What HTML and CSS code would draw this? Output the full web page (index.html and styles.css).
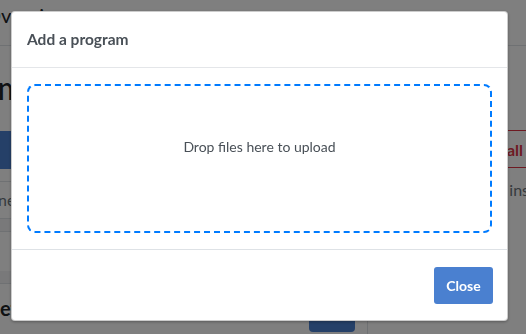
FILE: index.html
```html
<!DOCTYPE html>
<html>
<head>
    <meta charset="UTF-8">
    <meta name="viewport" content="width=device-width, initial-scale=1.0">
    <title>Add a program</title>
    <link rel="stylesheet" href="styles.css">
</head>
<body>
    <!-- Page behind the dialog -->
    <div class="page">
        <div class="topbar">
            <span class="brand">Overview</span>
        </div>
        <div class="main">
            <div class="content">
                <h1 class="heading">Programs</h1>
                <div class="tabs">
                    <span class="tab"></span>
                </div>
                <div class="search">newest first</div>
                <div class="table-head"></div>
                <div class="table-row"></div>
                <div class="table-head"></div>
                <div class="section">
                    <span class="section-title">Settings</span>
                    <button class="btn-save"></button>
                </div>
            </div>
            <div class="sidebar">
                <button class="btn-danger">Uninstall all</button>
                <p class="hint">Select programs to install</p>
            </div>
        </div>
    </div>

    <!-- Modal -->
    <div class="backdrop">
        <div class="dialog">
            <div class="dialog-header">
                <h5 class="dialog-title">Add a program</h5>
            </div>
            <div class="dialog-body">
                <div class="dropzone">Drop files here to upload</div>
            </div>
            <div class="dialog-footer">
                <button class="btn-close">Close</button>
            </div>
        </div>
    </div>
</body>
</html>
```

FILE: styles.css
```css
body {
    font-family: Lato, "Open Sans", Arial, sans-serif;
    margin: 0;
    padding: 0;
    background-color: #fff;
    overflow: hidden;
    height: 334px;
    color: #212529;
}

/* Page under the backdrop */
.page {
    width: 640px;
    margin-left: -60px;
}

.topbar {
    height: 46px;
    border-bottom: 1px solid #dee2e6;
    padding-left: 45px;
    box-sizing: border-box;
}

.brand {
    display: inline-block;
    font-size: 20px;
    line-height: 24px;
    padding-top: 3px;
}

.main {
    display: flex;
}

.content {
    width: 427px;
}

.heading {
    font-size: 32px;
    font-weight: 500;
    margin: 0 0 0 -35px;
    padding-top: 22px;
    line-height: 40px;
}

.tabs {
    margin-top: 23px;
    padding-left: 40px;
}

.tab {
    display: block;
    height: 38px;
    background-color: #4a80d0;
    border-radius: 3px;
}

.search {
    margin-top: 12px;
    height: 36px;
    border-top: 1px solid #dee2e6;
    border-bottom: 1px solid #dee2e6;
    color: #6c757d;
    font-size: 16px;
    line-height: 36px;
    padding-left: 58px;
}

.table-head {
    height: 12px;
    background-color: #f2f3f5;
    border-bottom: 1px solid #dee2e6;
}

.table-row {
    height: 39px;
}

.section {
    display: flex;
    align-items: flex-start;
    justify-content: space-between;
    padding: 12px 12px 0 49px;
}

.section-title {
    font-size: 20px;
    font-weight: 700;
    line-height: 24px;
}

.btn-save {
    width: 46px;
    height: 36px;
    border: none;
    border-radius: 4px;
    background-color: #4a80d0;
}

.sidebar {
    flex: 1;
    border-left: 1px solid #dee2e6;
    min-height: 300px;
    padding: 84px 0 0 20px;
}

.btn-danger {
    display: block;
    width: 190px;
    height: 38px;
    border: 1px solid #dc3545;
    border-radius: 4px;
    background: #fff;
    color: #dc3545;
    font-family: inherit;
    font-size: 16px;
    font-weight: 700;
    text-align: right;
    padding-right: 34px;
}

.hint {
    margin: 12px 0 0 -14px;
    color: #6c757d;
    font-size: 16px;
    white-space: nowrap;
}

/* Modal */
.backdrop {
    position: fixed;
    top: 0;
    left: 0;
    right: 0;
    bottom: 0;
    background-color: rgba(0, 0, 0, 0.5);
    padding: 11px 0 0 11px;
}

.dialog {
    width: 497px;
    box-sizing: border-box;
    background-color: #fff;
    border: 1px solid rgba(0, 0, 0, 0.2);
    border-radius: 4px;
    box-shadow: 0 1px 3px rgba(0, 0, 0, 0.3);
    color: #495057;
}

.dialog-header {
    padding: 15px 16px 16px 15px;
    border-bottom: 1px solid #e4e6e9;
}

.dialog-title {
    margin: 0;
    font-size: 15.5px;
    font-weight: 700;
    line-height: 24px;
}

.dialog-body {
    padding: 16px 15px 16px 15px;
}

.dropzone {
    height: 149px;
    box-sizing: border-box;
    border: 2px dashed #007bff;
    border-radius: 8px;
    padding-top: 51px;
    text-align: center;
    font-size: 14px;
    line-height: 20px;
}

.dialog-footer {
    display: flex;
    justify-content: flex-end;
    padding: 17px 14px 16px 16px;
    border-top: 1px solid #dee2e6;
}

.btn-close {
    width: 59px;
    height: 37px;
    padding: 0;
    border: none;
    border-radius: 3px;
    background-color: #4a80d0;
    color: #fff;
    font-family: inherit;
    font-size: 14px;
    font-weight: 700;
    cursor: pointer;
}
```
